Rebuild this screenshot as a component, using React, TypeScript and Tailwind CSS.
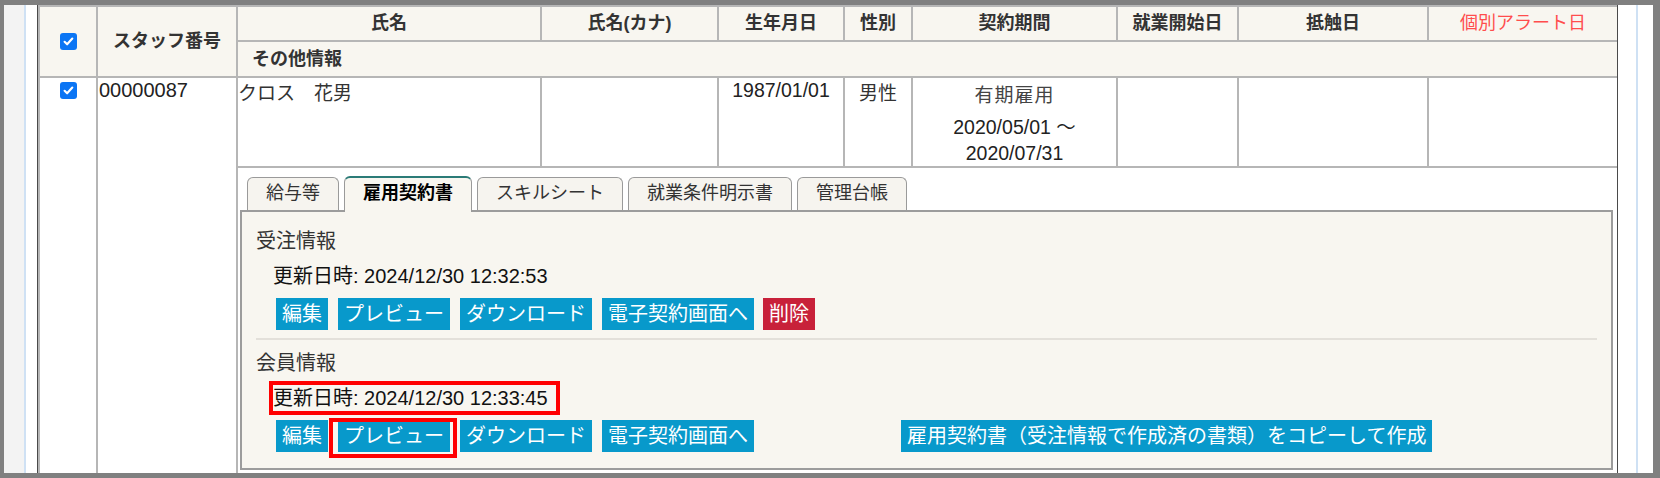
import React from 'react';

const CheckBox: React.FC = () => (
  <span className="inline-flex h-[17px] w-[17px] items-center justify-center rounded-[3px] bg-[#0b75f4]">
    <svg viewBox="0 0 16 16" className="h-[13px] w-[13px]" fill="none" stroke="white" strokeWidth="2.6" strokeLinecap="round" strokeLinejoin="round">
      <path d="M3.2 8.4l3.1 3 6.4-7" />
    </svg>
  </span>
);

const Btn: React.FC<{ children: React.ReactNode; red?: boolean }> = ({ children, red }) => (
  <span
    className={`inline-block h-[32px] px-[6px] text-[20px] leading-[32px] text-white ${
      red ? 'bg-[#c8213a]' : 'bg-[#0899cb]'
    }`}
  >
    {children}
  </span>
);

const tabs = ['給与等', '雇用契約書', 'スキルシート', '就業条件明示書', '管理台帳'];

export default function App() {
  return (
    <div className="h-[478px] w-[1660px] overflow-hidden bg-[#808080] pb-[5px] pl-[4px] pr-[7px] pt-[5px] font-['Liberation_Sans','Noto_Sans_CJK_JP',sans-serif] text-[#222]">
      <div className="flex h-full bg-white">
        {/* side gutters */}
        <div className="w-[20px] shrink-0 bg-[#f3f3f3]" />
        <div className="w-[2px] shrink-0 bg-[#cfe1f4]" />
        <div className="w-[11px] shrink-0" />

        <div className="w-[1581px] shrink-0 overflow-hidden border-x border-[#4a4a4a]">
          <table className="w-[1579px] table-fixed border-collapse">
            <colgroup>
              <col className="w-[58px]" />
              <col className="w-[140px]" />
              <col className="w-[304px]" />
              <col className="w-[177px]" />
              <col className="w-[126px]" />
              <col className="w-[68px]" />
              <col className="w-[205px]" />
              <col className="w-[121px]" />
              <col className="w-[190px]" />
              <col className="w-[190px]" />
            </colgroup>
            <thead>
              <tr className="h-[35px] bg-[#f8f6f0] text-[18px] font-bold text-[#333]">
                <th rowSpan={2} className="border-2 border-[#b6b6b6] align-middle">
                  <div className="flex justify-center">
                    <CheckBox />
                  </div>
                </th>
                <th rowSpan={2} className="border-2 border-[#b6b6b6] text-center align-middle">
                  スタッフ番号
                </th>
                <th className="border-2 border-[#b6b6b6] text-center">氏名</th>
                <th className="border-2 border-[#b6b6b6] text-center">氏名(カナ)</th>
                <th className="border-2 border-[#b6b6b6] text-center">生年月日</th>
                <th className="border-2 border-[#b6b6b6] text-center">性別</th>
                <th className="border-2 border-[#b6b6b6] text-center">契約期間</th>
                <th className="border-2 border-[#b6b6b6] text-center">就業開始日</th>
                <th className="border-2 border-[#b6b6b6] text-center">抵触日</th>
                <th className="border-2 border-[#b6b6b6] text-center font-normal text-[#ff4d4d]">個別アラート日</th>
              </tr>
              <tr className="h-[36px] bg-[#f8f6f0] text-[18px] font-bold text-[#333]">
                <th colSpan={8} className="border-2 border-[#b6b6b6] pl-[14px] text-left">
                  その他情報
                </th>
              </tr>
            </thead>
            <tbody>
              <tr className="h-[88px] text-[19px]">
                <td rowSpan={2} className="border-2 border-[#b6b6b6] pt-[4px] align-top">
                  <div className="flex justify-center">
                    <CheckBox />
                  </div>
                </td>
                <td rowSpan={2} className="border-2 border-[#b6b6b6] pl-[1px] align-top text-[20px] leading-[24px]">
                  00000087
                </td>
                <td className="border-2 border-[#b6b6b6] pt-[4px] align-top text-[19px] leading-[24px] text-[#333]">
                  クロス　花男
                </td>
                <td className="border-2 border-[#b6b6b6]" />
                <td className="border-2 border-[#b6b6b6] text-center align-top text-[19.5px] leading-[24px]">1987/01/01</td>
                <td className="border-2 border-[#b6b6b6] pt-[4px] text-center align-top text-[19px] leading-[24px] text-[#333]">
                  男性
                </td>
                <td className="border-2 border-[#b6b6b6] pt-[3px] text-center align-top">
                  <div className="mb-[3px] text-[19px] leading-[30px] tracking-[1px] text-[#444]">有期雇用</div>
                  <div className="text-[19.5px] leading-[27px]">2020/05/01 ～</div>
                  <div className="text-[19.5px] leading-[25px]">2020/07/31</div>
                </td>
                <td className="border-2 border-[#b6b6b6]" />
                <td className="border-2 border-[#b6b6b6]" />
                <td className="border-2 border-[#b6b6b6]" />
              </tr>
              <tr>
                <td colSpan={8} className="border-2 border-[#b6b6b6] pb-[4px] pl-[2px] pr-[4px] pt-[8px] align-top">
                  {/* tabs */}
                  <div className="relative z-10 -mb-[2px] flex items-end gap-[5px] pl-[7px]">
                    {tabs.map((t) =>
                      t === '雇用契約書' ? (
                        <div
                          key={t}
                          className="h-[36px] rounded-t-[6px] border border-b-0 border-t-2 border-[#9a9a9a] border-t-[#2b7b77] bg-[#f8f6f0] px-[18px] text-[18px] font-bold leading-[31px] text-black"
                        >
                          {t}
                        </div>
                      ) : (
                        <div
                          key={t}
                          className="mb-[2px] h-[33px] rounded-t-[6px] border border-b-0 border-[#9a9a9a] bg-[#f6f4ef] px-[18px] text-[18px] leading-[31px] text-[#333]"
                        >
                          {t}
                        </div>
                      )
                    )}
                  </div>

                  {/* panel */}
                  <div className="border-2 border-[#9c9c9c] bg-[#f8f6f0] px-[14px] pb-[16px] pt-[14px] text-[20px] leading-[30px] text-[#333]">
                    <div>受注情報</div>
                    <div className="mt-[5px] pl-[17px] text-[#111]">更新日時: 2024/12/30 12:32:53</div>
                    <div className="mt-[7px] flex gap-[10px] pl-[20px]">
                      <Btn>編集</Btn>
                      <Btn>プレビュー</Btn>
                      <Btn>ダウンロード</Btn>
                      <Btn>電子契約画面へ</Btn>
                      <span className="-ml-[1px]">
                        <Btn red>削除</Btn>
                      </span>
                    </div>

                    <div className="mt-[8px] h-[2px] bg-[#e3e0da]" />

                    <div className="mt-[8px]">会員情報</div>
                    <div className="mt-[5px] pl-[17px] text-[#111]">
                      <span className="relative inline-block">
                        更新日時: 2024/12/30 12:33:45
                        <span className="absolute -bottom-[2px] -left-[4px] -right-[12px] -top-[2px] border-4 border-[#ff0000]" />
                      </span>
                    </div>
                    <div className="mt-[7px] flex pl-[20px]">
                      <div className="flex gap-[10px]">
                        <Btn>編集</Btn>
                        <span className="relative inline-block">
                          <Btn>プレビュー</Btn>
                          <span className="absolute -bottom-[6px] -left-[9px] -right-[7px] -top-[2px] border-4 border-[#ff0000]" />
                        </span>
                        <Btn>ダウンロード</Btn>
                        <Btn>電子契約画面へ</Btn>
                      </div>
                      <div className="ml-[147px]">
                        <Btn>雇用契約書（受注情報で作成済の書類）をコピーして作成</Btn>
                      </div>
                    </div>
                  </div>
                </td>
              </tr>
            </tbody>
          </table>
        </div>

        <div className="w-[18px] shrink-0" />
        <div className="w-[2px] shrink-0 bg-[#cfe1f4]" />
        <div className="flex-1" />
      </div>
    </div>
  );
}
